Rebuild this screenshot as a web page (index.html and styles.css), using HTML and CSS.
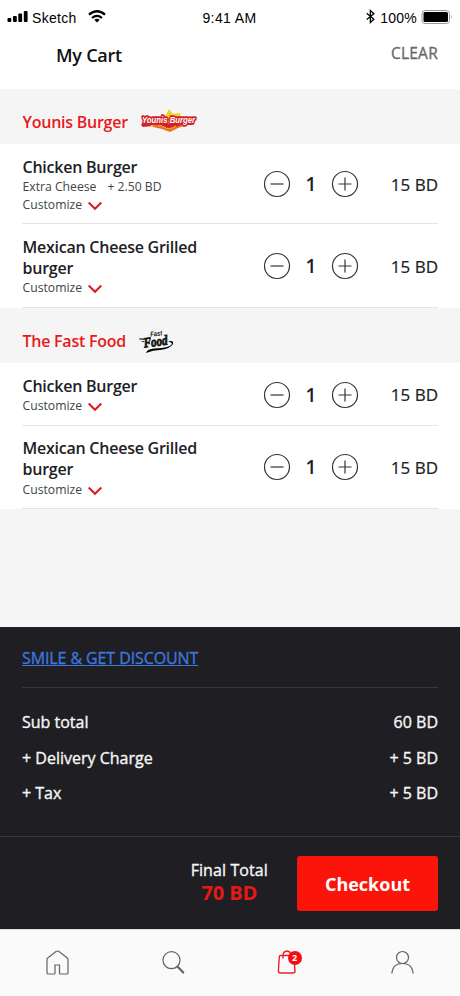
FILE: index.html
```html
<!DOCTYPE html>
<html lang="en">
<head>
<meta charset="utf-8">
<title>My Cart</title>
<link rel="stylesheet" href="styles.css">
</head>
<body>
<svg class="defs" width="0" height="0" aria-hidden="true">
  <symbol id="minus" viewBox="0 0 28 28"><circle cx="14" cy="14" r="12.5"/><path d="M7.500 14h13"/></symbol>
  <symbol id="plus" viewBox="0 0 28 28"><circle cx="14" cy="14" r="12.5"/><path d="M7.500 14h13M14 7.500v13"/></symbol>
  <symbol id="chevron" viewBox="0 0 16 10"><path d="M1.700 1.500L8 7.800l6.300-6.300"/></symbol>
</svg>
<div class="app">
  <div class="status">
    <div class="status-left">
      <svg class="signal" width="22" height="14" viewBox="0 0 22 14"><rect x="0.500" y="8" width="3.800" height="4" rx="1"/><rect x="6" y="6" width="3.800" height="6" rx="1"/><rect x="11.300" y="3.500" width="3.800" height="8.500" rx="1"/><rect x="16.800" y="1" width="3.800" height="11" rx="1"/></svg>
      <span class="carrier">Sketch</span>
      <svg class="wifi" width="18" height="13" viewBox="0 0 18 13"><path d="M1 4.700Q9-2.200 17 4.700M4 8Q9 3.800 14 8"/><path class="dot" d="M6.300 9.700Q9 7.800 11.700 9.700L9 12.500Z"/></svg>
    </div>
    <span class="time">9:41 AM</span>
    <div class="status-right">
      <svg class="bluetooth" width="9" height="15" viewBox="0 0 9 15"><path d="M.7 4.200l7.200 6-3.500 3.300V1.500l3.500 3.200-7.200 5.900"/></svg>
      <span class="charge">100%</span>
      <svg class="battery" width="33" height="16" viewBox="0 0 33 16"><rect class="shell" x="1" y="1.500" width="27.500" height="13" rx="3"/><rect x="2.500" y="3" width="24.500" height="10" rx="1.500"/><path class="cap" d="M30 5.700q1.800 2.300 0 4.600z"/></svg>
    </div>
  </div>
  <header class="top"><h1>My Cart</h1><span class="clear">CLEAR</span></header>

  <section class="vendor">
    <h2><span class="vendor-name">Younis Burger</span>
      <svg class="younis-logo" width="60" height="26" viewBox="0 0 60 26">
        <path fill="#f7cf1d" d="M21 9l6-2 3-6 4 5 7-1 1 8-8 8h-9z"/>
        <path fill="#ea7228" d="M12 17l14 1 22-1-9 3-8 4-8-3-9-2z"/>
        <path fill="#d3202b" d="M4 14l10 1 15 1 14-1 11-1-1 3-10 0-7 2-6 2-8-3-8 0-10 1-2-2z"/>
        <path fill="none" stroke="#f8bd22" d="M11 18q9-2.500 14 1t12-1"/>
        <text class="logo-script" x="3" y="14.500" textLength="53" lengthAdjust="spacingAndGlyphs">Younis Burger</text>
      </svg>
    </h2>
    <div class="item first">
      <div class="details"><h3>Chicken Burger</h3><p class="extra"><span>Extra Cheese</span><span>+ 2.50 BD</span></p><p class="custom">Customize <svg class="chev"><use href="#chevron"/></svg></p></div>
      <div class="stepper"><svg><use href="#minus"/></svg><b>1</b><svg><use href="#plus"/></svg></div><span class="price">15 BD</span>
    </div>
    <div class="item second">
      <div class="details"><h3>Mexican Cheese Grilled burger</h3><p class="custom">Customize <svg class="chev"><use href="#chevron"/></svg></p></div>
      <div class="stepper"><svg><use href="#minus"/></svg><b>1</b><svg><use href="#plus"/></svg></div><span class="price">15 BD</span>
    </div>
  </section>

  <section class="vendor">
    <h2><span class="vendor-name">The Fast Food</span>
      <svg class="fast-logo" width="36" height="26" viewBox="0 0 36 26">
        <g transform="rotate(-7 18 12)"><text class="logo-fast" x="12" y="7" textLength="12" lengthAdjust="spacingAndGlyphs">Fast</text><text class="logo-food" x="4.500" y="17" textLength="24" lengthAdjust="spacingAndGlyphs">Food</text></g>
        <path d="M7 24q1-4 8-4.500 17-.5 18-5-2-2.500-5-1.500 7-2.500 6 2-3 5-13 6-7 0-14 3zM0 9.500h6l-.5 1.300-5-.3zM1.500 12h4l-.5 1z"/>
      </svg>
    </h2>
    <div class="item third">
      <div class="details"><h3>Chicken Burger</h3><p class="custom">Customize <svg class="chev"><use href="#chevron"/></svg></p></div>
      <div class="stepper"><svg><use href="#minus"/></svg><b>1</b><svg><use href="#plus"/></svg></div><span class="price">15 BD</span>
    </div>
    <div class="item fourth">
      <div class="details"><h3>Mexican Cheese Grilled burger</h3><p class="custom">Customize <svg class="chev"><use href="#chevron"/></svg></p></div>
      <div class="stepper"><svg><use href="#minus"/></svg><b>1</b><svg><use href="#plus"/></svg></div><span class="price">15 BD</span>
    </div>
  </section>

  <section class="summary">
    <div class="promo"><a>SMILE &amp; GET DISCOUNT</a></div>
    <div class="charges">
      <div><span>Sub total</span><span>60 BD</span></div>
      <div><span>+ Delivery Charge</span><span>+ 5 BD</span></div>
      <div><span>+ Tax</span><span>+ 5 BD</span></div>
    </div>
    <div class="pay"><div class="total"><span>Final Total</span><strong>70 BD</strong></div><button>Checkout</button></div>
  </section>

  <nav class="tabs">
    <div><svg width="24" height="26" viewBox="0 0 24 26"><path d="M1 9.500q0-1 1-1.800l8-6.100q1.500-1.200 3 0l8 6.100q1 .8 1 1.800v13.200q0 1.300-1.300 1.300h-6.400q-.8 0-.8-.8V15H9v8.200q0 .8-.8.8H2.300q-1.300 0-1.300-1.300z"/></svg></div>
    <div><svg width="24" height="26" viewBox="0 0 24 26"><circle cx="10.500" cy="10.200" r="8.500"/><path d="M16 16.800l.7-.7 6 6.200-.6.800z"/></svg></div>
    <div class="bag"><svg width="24" height="26" viewBox="0 0 24 26"><path d="M4.500 5.500h13.300l1.200 15.500q.2 2-2 2H5q-2.800 0-2.600-2.500L3.300 6.700Q3.400 5.500 4.500 5.500zM7 8.500V5.500q0-4 4-4.500 4 .5 4 4.500v3"/></svg><span class="badge">2</span></div>
    <div><svg width="24" height="26" viewBox="0 0 24 26"><circle cx="11.500" cy="7.500" r="6"/><path d="M1 23.500V22q1.300-8.500 10.500-8.500T22 22v1.500"/></svg></div>
  </nav>
</div>
</body>
</html>
```

FILE: styles.css
```css
* { box-sizing: border-box; }
body, h1, h2, h3, p { margin: 0; }
body { background: #f5f5f5; font-family: "Open Sans", sans-serif; color: #202124; }
svg { flex: none; display: block; }
.defs { display: none; }
.app { width: 460px; height: 996px; display: flex; flex-direction: column; overflow: hidden; }
.status { flex: none; height: 36px; background: #fff; display: grid; grid-template-columns: 1fr auto 1fr; align-items: center; padding: 0 6px 0 7px; font: 14px/20px "Liberation Sans", sans-serif; color: #000; }
.status-left, .status-right { display: flex; align-items: center; }
.status-right { justify-content: flex-end; }
.signal { margin-top: -2px; }
.carrier { margin-left: 3px; letter-spacing: .3px; }
.wifi { margin-left: 11px; margin-top: -4px; fill: none; stroke: #000; stroke-width: 2.200; }
.wifi .dot { fill: #000; stroke: none; }
.time { letter-spacing: .4px; margin-right: 2px; }
.bluetooth { fill: none; stroke: #000; stroke-width: 1.300; margin-top: -3px; }
.charge { margin: 0 4px 0 5px; letter-spacing: .25px; }
.battery { margin-top: -2px; }
.shell { fill: #fff; stroke: #999; }
.cap { fill: #999; }
.top { flex: none; height: 53px; background: #fff; display: flex; justify-content: space-between; padding: 7px 22px 0 56px; }
.top h1 { font-size: 18px; line-height: 24px; font-weight: 600; letter-spacing: -.25px; color: #111; }
.clear { font-size: 15.500px; line-height: 21px; color: #6a6a6a; -webkit-text-stroke: .35px #6a6a6a; letter-spacing: .25px; }
.vendor { flex: none; }
.vendor h2 { display: flex; align-items: center; gap: 11px; height: 55px; padding: 10px 22px 0 22.500px; font-size: 16px; line-height: 24px; font-weight: 600; letter-spacing: -.25px; color: #e9191b; }
.vendor h2 svg { margin-top: -1px; overflow: visible; }
.vendor h2 .fast-logo { margin: 3px 0 0 2px; }
.logo-script { font: italic 700 9.500px "Liberation Sans", sans-serif; letter-spacing: 0; fill: #fff; stroke: #d3202b; stroke-width: 3.500; stroke-linejoin: round; paint-order: stroke; }
.logo-fast { font: italic 700 7px "Liberation Sans", sans-serif; letter-spacing: 0; fill: #111; }
.logo-food { font: italic 700 14px "Liberation Serif", serif; letter-spacing: 0; fill: #111; stroke: #111; stroke-width: .8; }
.item { height: 83px; background: linear-gradient(#e4e4e4, #e4e4e4) 22px 100% / 416px 1px no-repeat, #fff; padding: 0 22px; display: grid; grid-template-columns: 241px 96px 1fr; align-items: center; }
.first { height: 80px; }
.second { height: 84px; }
.third { height: 63px; }
.fourth .stepper { margin-top: -2px; }
.details { align-self: start; padding: 12.500px 0 0 .5px; width: 200px; }
.fourth .details { padding-top: 12px; }
.item h3 { font-size: 16px; line-height: 21px; font-weight: 600; letter-spacing: -.24px; }
.extra, .custom { display: flex; align-items: center; gap: 11px; font-size: 12.200px; line-height: 18px; color: #444; }
.custom { gap: 5px; }
.second .custom, .third .custom, .fourth .custom { margin-top: .5px; }
.chev { width: 16px; height: 10px; fill: none; stroke: #dc1b20; stroke-width: 2; margin-top: 2px; }
.stepper { display: flex; align-items: center; justify-content: space-between; }
.stepper svg { width: 28px; height: 28px; fill: none; stroke: #34343a; stroke-width: 1.200; }
.stepper b { font-size: 19px; line-height: 26px; font-weight: 600; }
.price { text-align: right; font-size: 17px; line-height: 24px; padding-top: 1px; -webkit-text-stroke: .2px; }
.summary { flex: none; height: 302px; margin-top: auto; background: #1f1e23; color: #f6f6f6; font-size: 16px; line-height: 24px; -webkit-text-stroke: .35px; }
.promo { height: 61px; margin: 0 22px; border-bottom: 1px solid #37363c; padding-top: 19px; }
.promo a { color: #3d76dc; text-decoration: underline; letter-spacing: -.1px; }
.charges { height: 148px; padding: 22px 22px 0; display: flex; flex-direction: column; gap: 11.500px; }
.charges div { display: flex; justify-content: space-between; }
.pay { height: 93px; border-top: 1px solid #37363c; display: flex; justify-content: flex-end; padding: 19px 22px 0; gap: 29px; }
.total { display: flex; flex-direction: column; align-items: center; padding-top: 3px; }
.total span { line-height: 23px; letter-spacing: .1px; }
.total strong { font-size: 20px; line-height: 22px; color: #e61915; font-weight: 700; letter-spacing: -.1px; -webkit-text-stroke: 0; }
.pay button { width: 141px; height: 55px; border: 0; border-radius: 3px; background: #fc140b; color: #fff; font: 700 18px/24px "Open Sans", sans-serif; padding: 0; -webkit-text-stroke: 0; }
.tabs { flex: none; height: 67px; background: #fafafa; border-top: 1px solid #ddd; display: grid; grid-template-columns: repeat(4, 115px); align-items: center; justify-items: center; }
.tabs svg { fill: none; stroke: #626266; stroke-width: 1.200; }
.tabs div { position: relative; }
.tabs .bag svg { stroke: #e82229; stroke-width: 1.400; }
.badge { position: absolute; left: 12px; top: 1px; width: 14px; height: 14px; border-radius: 50%; background: #f40d10; color: #fff; font-size: 9px; line-height: 14px; font-weight: 700; text-align: center; }
```
